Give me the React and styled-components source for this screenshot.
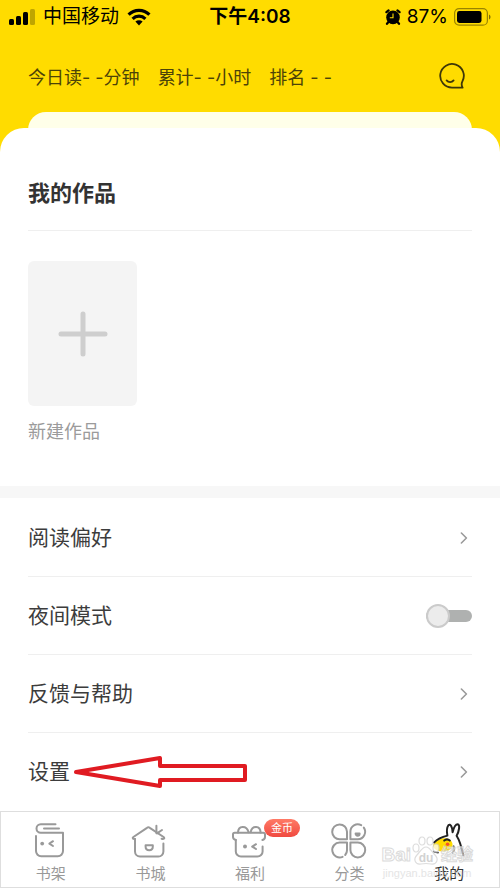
import React, { useState } from "react";
import styled, { createGlobalStyle } from "styled-components";

const GlobalStyle = createGlobalStyle`
  *,
  *::before,
  *::after {
    box-sizing: border-box;
  }

  body {
    margin: 0;
    background: #fff;
    color: #3c3c3c;
    font-family: Inter, "Noto Sans CJK SC", sans-serif;
  }

  button,
  input {
    font: inherit;
    color: inherit;
  }
`;

function SignalIcon() {
  return (
    <svg width="26" height="16" viewBox="0 0 26 16" aria-hidden="true">
      <rect x="0" y="10" width="5" height="6" rx="1.5" />
      <rect x="7" y="7" width="5" height="9" rx="1.5" />
      <rect x="14" y="3" width="5" height="13" rx="1.5" />
      <rect x="21" y="0" width="5" height="16" rx="1.5" opacity="0.25" />
    </svg>
  );
}

function WifiIcon() {
  return (
    <svg width="24" height="18" viewBox="0 0 24 18" aria-hidden="true">
      <g fill="none" stroke="#000" strokeWidth="3.2">
        <path d="M1.6 6.6a14.8 14.8 0 0 1 20.8 0" />
        <path d="M5.6 10.8a9.2 9.2 0 0 1 12.8 0" />
      </g>
      <path d="M12 17.4l-3.6-3.8a5.2 5.2 0 0 1 7.2 0z" />
    </svg>
  );
}

function AlarmIcon() {
  return (
    <svg width="16" height="16" viewBox="0 0 16 16" aria-hidden="true">
      <circle cx="8" cy="8.4" r="6.8" />
      <path
        d="M1.4 3.2L3.6 1.4M14.6 3.2L12.4 1.4M3.4 13l-1.4 1.8M12.6 13l1.4 1.8"
        stroke="#000"
        strokeWidth="2.2"
        strokeLinecap="round"
      />
      <path d="M8 4.4v4.4H4.8" fill="none" stroke="#ffdc00" strokeWidth="1.1" />
    </svg>
  );
}

function BatteryIcon() {
  return (
    <svg width="37" height="18" viewBox="0 0 37 18" aria-hidden="true">
      <rect
        x="0.6"
        y="0.6"
        width="32.8"
        height="16.6"
        rx="4.5"
        fill="none"
        stroke="#000"
        strokeOpacity="0.4"
        strokeWidth="1.2"
      />
      <rect x="3" y="3" width="24.5" height="12" rx="2.4" />
      <path d="M35 6.4c2 .8 2 4.2 0 5z" opacity="0.5" />
    </svg>
  );
}

function MessageIcon() {
  return (
    <svg
      width="28"
      height="28"
      viewBox="0 0 28 28"
      fill="none"
      stroke="#3e3708"
      strokeWidth="1.8"
      strokeLinecap="round"
      strokeLinejoin="round"
      aria-hidden="true"
    >
      <path d="M24.6 25.6H14A11.8 11.8 0 1 1 24.4 19.4C23.2 21.6 23.4 23.4 24.6 25.6z" />
      <path d="M8.6 18.4c1.8 2.4 5.2 2.4 7 0" />
    </svg>
  );
}

function PlusIcon() {
  return (
    <svg width="50" height="46" viewBox="0 0 50 46" aria-hidden="true">
      <path
        d="M3 23h44M25 3v40"
        stroke="#cecece"
        strokeWidth="5"
        strokeLinecap="round"
      />
    </svg>
  );
}

function ChevronIcon() {
  return (
    <svg width="8" height="12" viewBox="0 0 8 12" aria-hidden="true">
      <path
        d="M1.4 1l5 5-5 5"
        fill="none"
        stroke="#9a9a9a"
        strokeWidth="1.6"
        strokeLinecap="round"
        strokeLinejoin="round"
      />
    </svg>
  );
}

function TabIcon({ children }) {
  return (
    <svg
      width="40"
      height="40"
      viewBox="0 0 40 40"
      fill="none"
      stroke="#999"
      strokeWidth="2"
      strokeLinecap="round"
      strokeLinejoin="round"
      aria-hidden="true"
    >
      {children}
    </svg>
  );
}

const shelfIcon = (
  <TabIcon>
    <path d="M24.5 4.2H9.8a4.3 4.3 0 0 0 0 8.6H32V31a5.2 5.2 0 0 1-5.2 5.2H10.2A5.2 5.2 0 0 1 5 31V16" />
    <path d="M13 8.6h15" />
    <circle cx="11.2" cy="23.6" r="1.9" fill="#999" stroke="none" />
    <path d="M22 21.2l-3.6 2.4 3.6 2.4" />
  </TabIcon>
);

const storeIcon = (
  <TabIcon>
    <path d="M5 19v12.6a5 5 0 0 0 5 5h18.4a5 5 0 0 0 5-5v-8" />
    <path d="M5 19c-2.4.2-2.8-1-1.6-2L17 7.8a2.4 2.4 0 0 1 2.8 0L33.6 17c1.4 1.2.4 2.4-2 1.8" />
    <path d="M26.4 5.8v7.4M32 10l-5 3.4" />
    <path d="M15.6 25.2h7.2v1.6c0 4.6-7.2 4.6-7.2 0z" />
  </TabIcon>
);

const giftIcon = (
  <TabIcon>
    <path d="M5.8 20v11.4a5.2 5.2 0 0 0 5.2 5.2h16.4a5.2 5.2 0 0 0 5.2-5.2v-5" />
    <path d="M5.8 20C3.8 19.4 3 18.8 3 17v-2.6c0-1 .6-1.6 1.6-1.6h28.8c1 0 1.6.6 1.6 1.6V17c0 1.8-.8 2.6-2.6 3" />
    <path d="M8 12.6c.2-7 8.4-7.6 10.6-.4M20.6 12.2c1.6-7.2 9.8-6.6 10 .4" />
    <circle cx="15" cy="26.6" r="2" fill="#999" stroke="none" />
    <path d="M26 24.2l-3.8 2.4 3.8 2.4" />
  </TabIcon>
);

const cloverIcon = (
  <TabIcon>
    <path d="M17 19.2H9.8A7.4 7.4 0 1 1 17 11.8z" />
    <path d="M20.4 19.2v-7.4a7.4 7.4 0 0 1 10.8-6.6M33.8 7.6a7.4 7.4 0 0 1-6 11.6h-7.4" />
    <path d="M12.6 36.8A7.4 7.4 0 1 1 9.8 22.6H17v7.6c0 1.8-.6 3.4-1.8 4.8" />
    <path d="M20.4 22.6h7.4a7.4 7.4 0 1 1-7.4 7.4z" />
    <path d="M25.6 13.4h4c0 3-4 3-4 0z" fill="#999" />
  </TabIcon>
);

const rabbitIcon = (
  <TabIcon>
    <path
      d="M4 25c3-5 9-7.6 14-6.6 4.6 1.2 6.6 5 5 8.6-1.6 3.4-6 4.6-10 4.4-4.4-.2-8.4-1.8-9-6.4z"
      fill="#ffdc00"
      stroke="none"
    />
    <g stroke="#222" strokeWidth="2">
      <path d="M5.2 22.4c3-3.2 7.4-5.4 13.2-6.8-.8-4-.4-8.4 1-10.4 2-2 4 2 4.2 7 .8-3.2 2.4-8 5-8 2.8.2 1.4 7.4-1 11.6 3 4.6 5 11.6 6.6 19.4" />
      <path d="M15.2 20.6c1.6-1.4 4-1.4 5.6 0" />
    </g>
    <path d="M5 31.6l4 1M24.6 26.4c1 2 .4 4-1 6" stroke="#555" />
    <circle cx="18.6" cy="24.2" r="1.8" fill="#f3502c" stroke="none" />
  </TabIcon>
);

const tabs = [
  { label: "书架", icon: shelfIcon },
  { label: "书城", icon: storeIcon },
  { label: "福利", icon: giftIcon, badge: "金币" },
  { label: "分类", icon: cloverIcon },
  { label: "我的", icon: rabbitIcon, active: true },
];

function StatusBar() {
  return (
    <Status>
      <StatusGroup>
        <SignalIcon />
        <span>中国移动</span>
        <WifiIcon />
      </StatusGroup>
      <Clock>下午4:08</Clock>
      <StatusGroup $end>
        <AlarmIcon />
        <span>87%</span>
        <BatteryIcon />
      </StatusGroup>
    </Status>
  );
}

function Watermark() {
  return (
    <WatermarkBox aria-hidden="true">
      <WatermarkBrand>
        <span>Bai</span>
        <svg width="30" height="30" viewBox="0 0 28 30">
          <g fill="#fff" stroke="#d2d2d2" strokeWidth="1.2">
            <ellipse cx="4" cy="12" rx="3" ry="4" />
            <ellipse cx="10" cy="5" rx="3" ry="4" />
            <ellipse cx="18" cy="5" rx="3" ry="4" />
            <ellipse cx="24" cy="12" rx="3" ry="4" />
            <path d="M14 11c4 0 6 5 9 8 4 4 2 10-4 9-3-.6-7-.6-10 0-6 1-8-5-4-9 3-3 5-8 9-8z" />
          </g>
          <text x="14" y="26" textAnchor="middle" fontSize="12" fill="#c4c4c4">
            du
          </text>
        </svg>
        <WatermarkName>经验</WatermarkName>
      </WatermarkBrand>
      <WatermarkSite>jingyan.baidu.com</WatermarkSite>
    </WatermarkBox>
  );
}

function App() {
  const [night, setNight] = useState(false);

  return (
    <>
      <GlobalStyle />
      <Page>
        <Header>
          <StatusBar />
          <Stats>
            <span>今日读- -分钟</span>
            <span>累计- -小时</span>
            <span>排名 - -</span>
            <MessageButton type="button" aria-label="消息">
              <MessageIcon />
            </MessageButton>
          </Stats>
          <BackCard />
        </Header>

        <Sheet>
          <Works>
            <h2>我的作品</h2>
            <NewWork type="button">
              <Cover>
                <PlusIcon />
              </Cover>
              新建作品
            </NewWork>
          </Works>

          <Menu>
            <li>
              <MenuLink href="#preference">
                阅读偏好
                <ChevronIcon />
              </MenuLink>
            </li>
            <li>
              <MenuLabel htmlFor="night-mode">
                夜间模式
                <Switch
                  id="night-mode"
                  type="checkbox"
                  role="switch"
                  checked={night}
                  onChange={(e) => setNight(e.target.checked)}
                />
              </MenuLabel>
            </li>
            <li>
              <MenuLink href="#feedback">
                反馈与帮助
                <ChevronIcon />
              </MenuLink>
            </li>
            <li>
              <MenuLink href="#settings">
                设置
                <ChevronIcon />
              </MenuLink>
              {/* red arrow pointing at the settings entry */}
              <Pointer viewBox="0 0 176 36" aria-hidden="true">
                <path
                  d="M3 17L87 3v8h85v14H87v6z"
                  fill="none"
                  stroke="#e01b22"
                  strokeWidth="4"
                  strokeLinejoin="round"
                />
              </Pointer>
            </li>
          </Menu>
        </Sheet>

        <TabBar>
          {tabs.map((tab) => (
            <Tab
              key={tab.label}
              href="#"
              $active={tab.active}
              aria-current={tab.active ? "page" : undefined}
            >
              {tab.icon}
              {tab.badge && <Badge>{tab.badge}</Badge>}
              <span>{tab.label}</span>
            </Tab>
          ))}
          <Watermark />
        </TabBar>
      </Page>
    </>
  );
}

export default App;

const Page = styled.div`
  display: flex;
  flex-direction: column;
  min-height: 100vh;
`;

const Header = styled.header`
  background: #ffdc00;
  padding-bottom: 24px;
`;

const Status = styled.div`
  display: grid;
  grid-template-columns: 1fr auto 1fr;
  align-items: center;
  height: 34px;
  padding: 0 9px;
  color: #000;
  font-size: 19px;
  line-height: 34px;
`;

const StatusGroup = styled.div`
  display: flex;
  align-items: center;
  justify-content: ${(props) => (props.$end ? "flex-end" : "flex-start")};
  gap: ${(props) => (props.$end ? "6px" : "8px")};
`;

const Clock = styled.time`
  font-weight: 600;
`;

const Stats = styled.div`
  display: flex;
  align-items: center;
  gap: 18px;
  height: 78px;
  padding: 6px 34px 0 28px;
  color: #4c4308;
  font-size: 18px;
  white-space: nowrap;
`;

const MessageButton = styled.button`
  display: flex;
  margin-left: auto;
  padding: 0;
  border: 0;
  background: none;
`;

const BackCard = styled.div`
  height: 40px;
  margin: 0 28px -24px;
  border-radius: 18px 18px 0 0;
  background: #ffffe9;
`;

const Sheet = styled.main`
  flex: 1;
  margin-top: -24px;
  border-radius: 24px 24px 0 0;
  background: #fff;
`;

const Works = styled.section`
  padding: 32px 28px 40px;
  border-bottom: 12px solid #f7f7f7;

  h2 {
    margin: 0 0 30px;
    padding: 16px 0 20px;
    border-bottom: 1px solid #efefef;
    color: #333;
    font-size: 22px;
    font-weight: 600;
    line-height: 34px;
  }
`;

const NewWork = styled.button`
  display: flex;
  flex-direction: column;
  gap: 12px;
  padding: 0;
  border: 0;
  background: none;
  color: #9b9b9b;
  font-size: 18px;
  line-height: 28px;
  text-align: left;
`;

const Cover = styled.span`
  display: flex;
  align-items: center;
  justify-content: center;
  width: 109px;
  height: 145px;
  border-radius: 6px;
  background: #f4f4f4;
`;

const Menu = styled.ul`
  margin: 0;
  padding: 1px 28px 0;
  list-style: none;

  li {
    position: relative;
    height: 78px;
    border-bottom: 1px solid #efefef;
  }

  li:last-child {
    border-bottom: 0;
  }
`;

const MenuLink = styled.a`
  display: flex;
  align-items: center;
  justify-content: space-between;
  height: 100%;
  padding-right: 4px;
  color: #3c3c3c;
  font-size: 21px;
  line-height: 28px;
  text-decoration: none;
`;

const MenuLabel = styled(MenuLink).attrs({ as: "label" })`
  padding-right: 0;
`;

const Switch = styled.input`
  position: relative;
  appearance: none;
  width: 46px;
  height: 12px;
  margin: 0;
  border-radius: 6px;
  background: #afb1b0;

  &::before {
    content: "";
    position: absolute;
    top: -6px;
    left: 0;
    width: 24px;
    height: 24px;
    border: 2px solid #cbcbcb;
    border-radius: 50%;
    background: #ececec;
  }

  &:checked {
    background: #ffdc00;
  }

  &:checked::before {
    left: 22px;
  }
`;

const Pointer = styled.svg`
  position: absolute;
  top: 22px;
  left: 45px;
  width: 176px;
  height: 36px;
  pointer-events: none;
`;

const TabBar = styled.nav`
  position: relative;
  display: grid;
  grid-template-columns: repeat(5, 1fr);
  height: 77px;
  border: 1px solid #dedede;
  background: #fff;
`;

const Tab = styled.a`
  position: relative;
  display: flex;
  flex-direction: column;
  align-items: center;
  padding-top: 8px;
  color: ${(props) => (props.$active ? "#333" : "#999")};
  font-size: 15px;
  line-height: 27px;
  text-decoration: none;
`;

const Badge = styled.span`
  position: absolute;
  top: 7px;
  left: calc(50% + 14px);
  padding: 0 7px;
  border-radius: 9px;
  background: linear-gradient(#ff7a66, #f04a40);
  color: #fff;
  font-size: 11px;
  line-height: 18px;
  white-space: nowrap;
`;

const WatermarkBox = styled.div`
  position: absolute;
  right: 26px;
  bottom: 7px;
  display: flex;
  flex-direction: column;
  align-items: center;
  color: #fff;
  font-family: "Liberation Sans", "Noto Sans CJK SC", sans-serif;
  opacity: 0.75;
  pointer-events: none;
`;

const WatermarkBrand = styled.div`
  display: flex;
  align-items: flex-end;
  font-size: 19px;
  font-weight: 700;
  line-height: 22px;
  -webkit-text-stroke: 1px #cfcfcf;

  svg {
    -webkit-text-stroke: 0;
  }
`;

const WatermarkName = styled.span`
  font-size: 16px;
`;

const WatermarkSite = styled.div`
  color: #dcdcdc;
  font-size: 11px;
  line-height: 14px;
`;
